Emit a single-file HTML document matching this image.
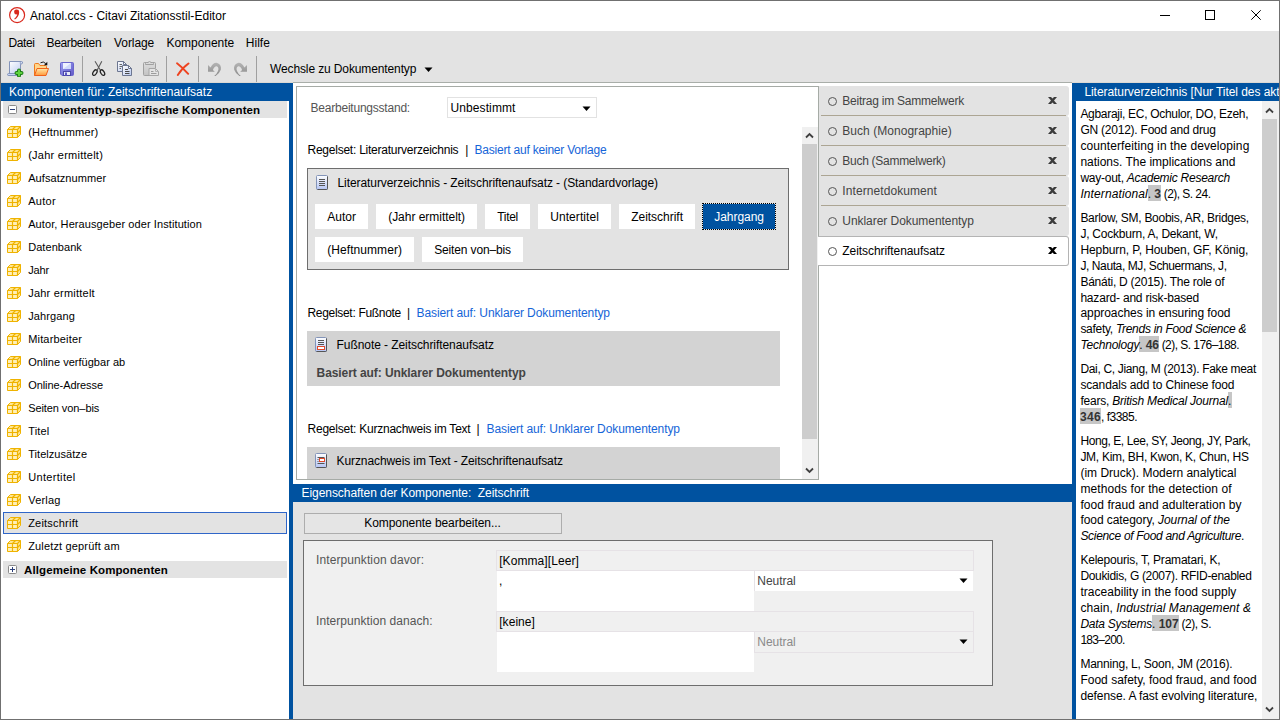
<!DOCTYPE html>
<html lang="de">
<head>
<meta charset="utf-8">
<title>Anatol.ccs - Citavi Zitationsstil-Editor</title>
<style>
html,body{margin:0;padding:0;}
body{width:1280px;height:720px;overflow:hidden;position:relative;background:#fff;font-family:"Liberation Sans",sans-serif;font-size:12px;color:#000;}
*{box-sizing:border-box;}
.a{position:absolute;white-space:nowrap;}
.t{position:absolute;white-space:pre;line-height:16px;height:16px;}
.blue{background:#0052a0;}
.hdr{color:#fff;font-size:12px;}
/* tree */
.ti{position:absolute;left:28px;font-size:11px;line-height:14px;height:14px;white-space:nowrap;}
.cube{position:absolute;left:7px;width:14px;height:12px;}
.gh{font-weight:700;font-size:11.5px;line-height:15px;white-space:nowrap;}
/* rule buttons */
.rb{position:absolute;height:25px;background:#fff;text-align:center;line-height:25px;white-space:nowrap;}
/* tabs */
.tab{position:absolute;left:819px;width:250px;height:30px;background:#e3e3e3;border-radius:0 3px 3px 0;}
.tab .sep{position:absolute;left:2px;right:3px;bottom:0;height:1px;background:#aca593;}
.tab .rad{position:absolute;left:9px;top:11px;width:9px;height:9px;border:1px solid #555;border-radius:50%;}
.tab.sel{left:818px;width:251px;top:236px;height:30px;background:#fff;border:1px solid #b4b4b4;border-left:0;}
.tab.sel .rad{left:10px;top:10px;}
.lnk{color:#1565d8;}
/* bibliography */
.bib{position:absolute;left:1080px;width:180px;line-height:16px;font-size:12px;white-space:nowrap;}
.hl{background:#c6c6c6;}
.bl b{color:#333;}
</style>
</head>
<body>
<!-- ===== window chrome ===== -->
<div class="a" style="left:0;top:0;width:1280px;height:31px;background:#fff;"></div>
<div class="a" id="chrome" style="left:0;top:31px;width:1280px;height:51px;background:#e3e3e3;"></div>
<div class="a" style="left:0;top:82px;width:1280px;height:1px;background:#dcd9d4;"></div>
<div class="a" style="left:293px;top:82px;width:779px;height:1px;background:#a9aea9;"></div>

<!-- title -->
<svg class="a" style="left:8px;top:6px" width="18" height="18" viewBox="0 0 18 18"><circle cx="9.1" cy="9.1" r="7.5" fill="#fff" stroke="#d9281c" stroke-width="1.2"/><path d="M8.8 3.6a2.4 2.4 0 0 1 2.4 2.4c0 3.5-2 6-4.3 7.6l-.7-.9c1.7-1.3 2.8-2.8 3-4.4a2.4 2.4 0 1 1-.4-4.7z" fill="#d9281c"/></svg>
<svg class="a" style="left:1155px;top:5px" width="120" height="22" viewBox="0 0 120 22"><g fill="none" stroke="#000" stroke-width="1"><path d="M5 10.5h10"/><rect x="50.5" y="5.5" width="9" height="9"/><path d="M96.3 5.3l9.4 9.4M105.7 5.3l-9.4 9.4"/></g></svg>

<!-- toolbar -->
<svg width="0" height="0" style="position:absolute"><defs>
<linearGradient id="gpap" x1="0" y1="0" x2="1" y2="1"><stop offset="0" stop-color="#ffffff"/><stop offset="1" stop-color="#b9c9f0"/></linearGradient>
<linearGradient id="gfold" x1="0" y1="0" x2="0" y2="1"><stop offset="0" stop-color="#ffe9a8"/><stop offset="1" stop-color="#ff9a3c"/></linearGradient>
<linearGradient id="gflop" x1="0" y1="0" x2="1" y2="1"><stop offset="0" stop-color="#9a9ff2"/><stop offset="1" stop-color="#6258c8"/></linearGradient>
<linearGradient id="ggray" x1="0" y1="0" x2="0" y2="1"><stop offset="0" stop-color="#dedede"/><stop offset="1" stop-color="#c2c2c2"/></linearGradient>
<linearGradient id="gund" x1="0" y1="0" x2="0" y2="1"><stop offset="0" stop-color="#b4b4b4"/><stop offset="1" stop-color="#8c8c8c"/></linearGradient>
</defs></svg>
<svg class="a" style="left:7px;top:61px" width="17" height="16" viewBox="0 0 17 16"><path d="M2.5 0.5H14.5Q15.8 0.5 15.5 2Q15.2 3.2 13.5 3.2V12.5H2.5Z" fill="url(#gpap)" stroke="#8494ba" stroke-width="1"/><path d="M13.5 3.2Q12.8 1.5 13.8 0.8" fill="none" stroke="#8494ba" stroke-width="0.8"/><path d="M1.5 12.5H11.5V14.5H2Q0.3 14.5 0.5 13.5Q0.6 12.5 1.5 12.5Z" fill="#c9d7f6" stroke="#8494ba" stroke-width="1"/><path d="M12 9.5V14.5M9.5 12H14.5" stroke="#1d7d18" stroke-width="4" stroke-linecap="round"/><path d="M12 9.5V14.5M9.5 12H14.5" stroke="#5fd23f" stroke-width="2" stroke-linecap="round"/></svg>
<svg class="a" style="left:33px;top:61px" width="17" height="16" viewBox="0 0 17 16"><path d="M1.5 14.5V3.5Q1.5 2.5 2.5 2.5H5.5L7 4.5H12.5Q13.5 4.5 13.5 5.5V7.5" fill="#ffd58a" stroke="#f07a1a" stroke-width="1"/><path d="M1.5 14.5L4 7.5H15.5L13 14.5Z" fill="url(#gfold)" stroke="#f0601a" stroke-width="1"/><path d="M7.5 1.8Q10.5 -0.2 12.8 2.6" fill="none" stroke="#222" stroke-width="1"/><path d="M14.3 0.8V4.2H10.9Z" fill="#111"/></svg>
<svg class="a" style="left:60px;top:62px" width="14" height="14" viewBox="0 0 14 14"><path d="M1.5 0.5H12.5Q13.5 0.5 13.5 1.5V12.5Q13.5 13.5 12.5 13.5H2L0.5 12V1.5Q0.5 0.5 1.5 0.5Z" fill="url(#gflop)" stroke="#6a66cc" stroke-width="1"/><rect x="3" y="1" width="8" height="6" fill="#eef2ff"/><path d="M3 7L11 1V7Z" fill="#cfd9fb"/><rect x="3.5" y="9.5" width="7" height="4" fill="#e6e9f8" stroke="#4a46a8" stroke-width="1"/><rect x="5" y="10.5" width="2" height="3" fill="#5a55c4"/></svg>
<svg class="a" style="left:91px;top:60px" width="16" height="17" viewBox="0 0 16 17"><path d="M4 1.2L9.6 10.5M10.8 1.2L6 10.5" fill="none" stroke="#5a5a5a" stroke-width="1.1"/><ellipse cx="3.9" cy="12.6" rx="1.7" ry="3.1" transform="rotate(32 3.9 12.6)" fill="none" stroke="#222" stroke-width="1.25"/><ellipse cx="11.5" cy="12.6" rx="1.7" ry="3.1" transform="rotate(-32 11.5 12.6)" fill="none" stroke="#222" stroke-width="1.25"/></svg>
<svg class="a" style="left:117px;top:61px" width="17" height="16" viewBox="0 0 17 16"><g transform="translate(0,0)"><path d="M0.5 0.5H6.5L9.5 3.5V10.5H0.5Z" fill="url(#gpap)" stroke="#6c7690" stroke-width="1"/><path d="M6.5 0.5V3.5H9.5Z" fill="#fff" stroke="#6c7690" stroke-width="1"/><path d="M2.5 3.5H5M2.5 5.5H5M2.5 7.5H4" stroke="#666" stroke-width="1"/></g><g transform="translate(5,4)"><path d="M0.5 0.5H6.5L9.5 3.5V10.5H0.5Z" fill="url(#gpap)" stroke="#6c7690" stroke-width="1"/><path d="M6.5 0.5V3.5H9.5Z" fill="#fff" stroke="#6c7690" stroke-width="1"/><path d="M3 4.5H6M3 6.5H7.5M3 8.5H7.5" stroke="#4a4a4a" stroke-width="1"/></g></svg>
<svg class="a" style="left:143px;top:61px" width="16" height="16" viewBox="0 0 16 16"><rect x="0.5" y="1.5" width="12" height="13" rx="1" fill="url(#ggray)" stroke="#a0a0a0" stroke-width="1"/><path d="M2.5 3.5V2.5Q2.5 1.5 3.5 1.5H5Q6.5 -0.8 8 1.5H9.5Q10.5 1.5 10.5 2.5V3.5Z" fill="#dadada" stroke="#a0a0a0" stroke-width="1"/><path d="M6 7.5H12.5L15.5 10.5V14.5H6Z" fill="#e4e4e4" stroke="#a6a6a6" stroke-width="1"/><path d="M12.5 7.5V10.5H15.5" fill="none" stroke="#b4b4b4" stroke-width="1"/><path d="M8 10.5H10.5M8 12.5H13.5" stroke="#9c9c9c" stroke-width="1"/></svg>
<svg class="a" style="left:176px;top:62px" width="14" height="14" viewBox="0 0 14 14"><path d="M1 1.2Q6 5 12.2 11.8M12.5 1.5Q6 6 1.8 13" fill="none" stroke="#ee4320" stroke-width="1.9" stroke-linecap="round"/></svg>
<svg class="a" style="left:207px;top:62px" width="15" height="15" viewBox="0 0 15 15"><path d="M1 3L1 9.8L7.8 9.8L5.9 7.9Q7.5 3.8 9.8 4.2Q12.3 5.5 11 9Q10 11.8 7.2 13.9L8.6 13.9Q12.6 11.5 13.8 7.8Q14.8 2.5 10.2 0.9Q6 0.3 3.6 5.6Z" fill="url(#gund)"/></svg>
<svg class="a" style="left:233px;top:62px" width="15" height="15" viewBox="0 0 15 15"><g transform="translate(15,0) scale(-1,1)"><path d="M1 3L1 9.8L7.8 9.8L5.9 7.9Q7.5 3.8 9.8 4.2Q12.3 5.5 11 9Q10 11.8 7.2 13.9L8.6 13.9Q12.6 11.5 13.8 7.8Q14.8 2.5 10.2 0.9Q6 0.3 3.6 5.6Z" fill="url(#gund)"/></g></svg>
<div class="a" style="left:82px;top:56px;width:1px;height:26px;background:#a0a0a0;"></div>
<div class="a" style="left:166px;top:56px;width:1px;height:26px;background:#a0a0a0;"></div>
<div class="a" style="left:198px;top:56px;width:1px;height:26px;background:#a0a0a0;"></div>
<div class="a" style="left:256px;top:56px;width:1px;height:26px;background:#a0a0a0;"></div>

<!-- ===== left panel ===== -->
<div class="a blue" style="left:1px;top:83px;width:292px;height:18px;"></div>
<div class="a blue" style="left:289px;top:83px;width:4px;height:636px;"></div>
<div class="a" style="left:3px;top:101px;width:284px;height:17px;background:#e3e3e3;"></div>
<svg class="a" style="left:8px;top:105px" width="9" height="9"><rect x="0.5" y="0.5" width="8" height="8" rx="1" fill="#fff" stroke="#8a8a8a"/><path d="M2 4.5h5" stroke="#2b3f7a"/></svg>
<div class="a gh" style="letter-spacing:0.07px;left:24.3px;top:103px;">Dokumententyp-spezifische Komponenten</div>
<svg class="cube" style="top:126px" width="14" height="12" viewBox="0 0 14 12"><path d="M0.5 3.5L3.5 0.5H13.5V8.5L10.5 11.5H0.5Z" fill="#ffe690" stroke="#efb300" stroke-width="1"/><path d="M1 4H10V11H1Z" fill="#fff0b8"/><path d="M0.5 3.5H10.5V11.5M10.5 3.5L13.5 0.5M5.5 3.5V11.5M0.5 7.5H10.5M5.5 3.5L8.5 0.5M10.5 7.5L13.5 4.5" fill="none" stroke="#efb300" stroke-width="1.2"/></svg>
<div class="ti" style="letter-spacing:0.2px;left:28.2px;top:125px;">(Heftnummer)</div>
<svg class="cube" style="top:149px" width="14" height="12" viewBox="0 0 14 12"><path d="M0.5 3.5L3.5 0.5H13.5V8.5L10.5 11.5H0.5Z" fill="#ffe690" stroke="#efb300" stroke-width="1"/><path d="M1 4H10V11H1Z" fill="#fff0b8"/><path d="M0.5 3.5H10.5V11.5M10.5 3.5L13.5 0.5M5.5 3.5V11.5M0.5 7.5H10.5M5.5 3.5L8.5 0.5M10.5 7.5L13.5 4.5" fill="none" stroke="#efb300" stroke-width="1.2"/></svg>
<div class="ti" style="letter-spacing:0.25px;left:28.2px;top:148px;">(Jahr ermittelt)</div>
<svg class="cube" style="top:172px" width="14" height="12" viewBox="0 0 14 12"><path d="M0.5 3.5L3.5 0.5H13.5V8.5L10.5 11.5H0.5Z" fill="#ffe690" stroke="#efb300" stroke-width="1"/><path d="M1 4H10V11H1Z" fill="#fff0b8"/><path d="M0.5 3.5H10.5V11.5M10.5 3.5L13.5 0.5M5.5 3.5V11.5M0.5 7.5H10.5M5.5 3.5L8.5 0.5M10.5 7.5L13.5 4.5" fill="none" stroke="#efb300" stroke-width="1.2"/></svg>
<div class="ti" style="letter-spacing:0.07px;left:28.2px;top:171px;">Aufsatznummer</div>
<svg class="cube" style="top:195px" width="14" height="12" viewBox="0 0 14 12"><path d="M0.5 3.5L3.5 0.5H13.5V8.5L10.5 11.5H0.5Z" fill="#ffe690" stroke="#efb300" stroke-width="1"/><path d="M1 4H10V11H1Z" fill="#fff0b8"/><path d="M0.5 3.5H10.5V11.5M10.5 3.5L13.5 0.5M5.5 3.5V11.5M0.5 7.5H10.5M5.5 3.5L8.5 0.5M10.5 7.5L13.5 4.5" fill="none" stroke="#efb300" stroke-width="1.2"/></svg>
<div class="ti" style="letter-spacing:0.3px;left:28.2px;top:194px;">Autor</div>
<svg class="cube" style="top:218px" width="14" height="12" viewBox="0 0 14 12"><path d="M0.5 3.5L3.5 0.5H13.5V8.5L10.5 11.5H0.5Z" fill="#ffe690" stroke="#efb300" stroke-width="1"/><path d="M1 4H10V11H1Z" fill="#fff0b8"/><path d="M0.5 3.5H10.5V11.5M10.5 3.5L13.5 0.5M5.5 3.5V11.5M0.5 7.5H10.5M5.5 3.5L8.5 0.5M10.5 7.5L13.5 4.5" fill="none" stroke="#efb300" stroke-width="1.2"/></svg>
<div class="ti" style="letter-spacing:0.09px;left:28.2px;top:217px;">Autor, Herausgeber oder Institution</div>
<svg class="cube" style="top:241px" width="14" height="12" viewBox="0 0 14 12"><path d="M0.5 3.5L3.5 0.5H13.5V8.5L10.5 11.5H0.5Z" fill="#ffe690" stroke="#efb300" stroke-width="1"/><path d="M1 4H10V11H1Z" fill="#fff0b8"/><path d="M0.5 3.5H10.5V11.5M10.5 3.5L13.5 0.5M5.5 3.5V11.5M0.5 7.5H10.5M5.5 3.5L8.5 0.5M10.5 7.5L13.5 4.5" fill="none" stroke="#efb300" stroke-width="1.2"/></svg>
<div class="ti" style="letter-spacing:0.06px;left:28.2px;top:240px;">Datenbank</div>
<svg class="cube" style="top:264px" width="14" height="12" viewBox="0 0 14 12"><path d="M0.5 3.5L3.5 0.5H13.5V8.5L10.5 11.5H0.5Z" fill="#ffe690" stroke="#efb300" stroke-width="1"/><path d="M1 4H10V11H1Z" fill="#fff0b8"/><path d="M0.5 3.5H10.5V11.5M10.5 3.5L13.5 0.5M5.5 3.5V11.5M0.5 7.5H10.5M5.5 3.5L8.5 0.5M10.5 7.5L13.5 4.5" fill="none" stroke="#efb300" stroke-width="1.2"/></svg>
<div class="ti" style="letter-spacing:-0.15px;left:28.2px;top:263px;">Jahr</div>
<svg class="cube" style="top:287px" width="14" height="12" viewBox="0 0 14 12"><path d="M0.5 3.5L3.5 0.5H13.5V8.5L10.5 11.5H0.5Z" fill="#ffe690" stroke="#efb300" stroke-width="1"/><path d="M1 4H10V11H1Z" fill="#fff0b8"/><path d="M0.5 3.5H10.5V11.5M10.5 3.5L13.5 0.5M5.5 3.5V11.5M0.5 7.5H10.5M5.5 3.5L8.5 0.5M10.5 7.5L13.5 4.5" fill="none" stroke="#efb300" stroke-width="1.2"/></svg>
<div class="ti" style="letter-spacing:0.22px;left:28.2px;top:286px;">Jahr ermittelt</div>
<svg class="cube" style="top:310px" width="14" height="12" viewBox="0 0 14 12"><path d="M0.5 3.5L3.5 0.5H13.5V8.5L10.5 11.5H0.5Z" fill="#ffe690" stroke="#efb300" stroke-width="1"/><path d="M1 4H10V11H1Z" fill="#fff0b8"/><path d="M0.5 3.5H10.5V11.5M10.5 3.5L13.5 0.5M5.5 3.5V11.5M0.5 7.5H10.5M5.5 3.5L8.5 0.5M10.5 7.5L13.5 4.5" fill="none" stroke="#efb300" stroke-width="1.2"/></svg>
<div class="ti" style="letter-spacing:0.12px;left:28.2px;top:309px;">Jahrgang</div>
<svg class="cube" style="top:333px" width="14" height="12" viewBox="0 0 14 12"><path d="M0.5 3.5L3.5 0.5H13.5V8.5L10.5 11.5H0.5Z" fill="#ffe690" stroke="#efb300" stroke-width="1"/><path d="M1 4H10V11H1Z" fill="#fff0b8"/><path d="M0.5 3.5H10.5V11.5M10.5 3.5L13.5 0.5M5.5 3.5V11.5M0.5 7.5H10.5M5.5 3.5L8.5 0.5M10.5 7.5L13.5 4.5" fill="none" stroke="#efb300" stroke-width="1.2"/></svg>
<div class="ti" style="letter-spacing:0.17px;left:28.2px;top:332px;">Mitarbeiter</div>
<svg class="cube" style="top:356px" width="14" height="12" viewBox="0 0 14 12"><path d="M0.5 3.5L3.5 0.5H13.5V8.5L10.5 11.5H0.5Z" fill="#ffe690" stroke="#efb300" stroke-width="1"/><path d="M1 4H10V11H1Z" fill="#fff0b8"/><path d="M0.5 3.5H10.5V11.5M10.5 3.5L13.5 0.5M5.5 3.5V11.5M0.5 7.5H10.5M5.5 3.5L8.5 0.5M10.5 7.5L13.5 4.5" fill="none" stroke="#efb300" stroke-width="1.2"/></svg>
<div class="ti" style="letter-spacing:0.02px;left:28.2px;top:355px;">Online verfügbar ab</div>
<svg class="cube" style="top:379px" width="14" height="12" viewBox="0 0 14 12"><path d="M0.5 3.5L3.5 0.5H13.5V8.5L10.5 11.5H0.5Z" fill="#ffe690" stroke="#efb300" stroke-width="1"/><path d="M1 4H10V11H1Z" fill="#fff0b8"/><path d="M0.5 3.5H10.5V11.5M10.5 3.5L13.5 0.5M5.5 3.5V11.5M0.5 7.5H10.5M5.5 3.5L8.5 0.5M10.5 7.5L13.5 4.5" fill="none" stroke="#efb300" stroke-width="1.2"/></svg>
<div class="ti" style="letter-spacing:-0.07px;left:28.2px;top:378px;">Online-Adresse</div>
<svg class="cube" style="top:402px" width="14" height="12" viewBox="0 0 14 12"><path d="M0.5 3.5L3.5 0.5H13.5V8.5L10.5 11.5H0.5Z" fill="#ffe690" stroke="#efb300" stroke-width="1"/><path d="M1 4H10V11H1Z" fill="#fff0b8"/><path d="M0.5 3.5H10.5V11.5M10.5 3.5L13.5 0.5M5.5 3.5V11.5M0.5 7.5H10.5M5.5 3.5L8.5 0.5M10.5 7.5L13.5 4.5" fill="none" stroke="#efb300" stroke-width="1.2"/></svg>
<div class="ti" style="letter-spacing:-0.08px;left:28.2px;top:401px;">Seiten von–bis</div>
<svg class="cube" style="top:425px" width="14" height="12" viewBox="0 0 14 12"><path d="M0.5 3.5L3.5 0.5H13.5V8.5L10.5 11.5H0.5Z" fill="#ffe690" stroke="#efb300" stroke-width="1"/><path d="M1 4H10V11H1Z" fill="#fff0b8"/><path d="M0.5 3.5H10.5V11.5M10.5 3.5L13.5 0.5M5.5 3.5V11.5M0.5 7.5H10.5M5.5 3.5L8.5 0.5M10.5 7.5L13.5 4.5" fill="none" stroke="#efb300" stroke-width="1.2"/></svg>
<div class="ti" style="letter-spacing:0.16px;left:28.2px;top:424px;">Titel</div>
<svg class="cube" style="top:448px" width="14" height="12" viewBox="0 0 14 12"><path d="M0.5 3.5L3.5 0.5H13.5V8.5L10.5 11.5H0.5Z" fill="#ffe690" stroke="#efb300" stroke-width="1"/><path d="M1 4H10V11H1Z" fill="#fff0b8"/><path d="M0.5 3.5H10.5V11.5M10.5 3.5L13.5 0.5M5.5 3.5V11.5M0.5 7.5H10.5M5.5 3.5L8.5 0.5M10.5 7.5L13.5 4.5" fill="none" stroke="#efb300" stroke-width="1.2"/></svg>
<div class="ti" style="letter-spacing:0.05px;left:28.2px;top:447px;">Titelzusätze</div>
<svg class="cube" style="top:471px" width="14" height="12" viewBox="0 0 14 12"><path d="M0.5 3.5L3.5 0.5H13.5V8.5L10.5 11.5H0.5Z" fill="#ffe690" stroke="#efb300" stroke-width="1"/><path d="M1 4H10V11H1Z" fill="#fff0b8"/><path d="M0.5 3.5H10.5V11.5M10.5 3.5L13.5 0.5M5.5 3.5V11.5M0.5 7.5H10.5M5.5 3.5L8.5 0.5M10.5 7.5L13.5 4.5" fill="none" stroke="#efb300" stroke-width="1.2"/></svg>
<div class="ti" style="letter-spacing:0.33px;left:28.2px;top:470px;">Untertitel</div>
<svg class="cube" style="top:494px" width="14" height="12" viewBox="0 0 14 12"><path d="M0.5 3.5L3.5 0.5H13.5V8.5L10.5 11.5H0.5Z" fill="#ffe690" stroke="#efb300" stroke-width="1"/><path d="M1 4H10V11H1Z" fill="#fff0b8"/><path d="M0.5 3.5H10.5V11.5M10.5 3.5L13.5 0.5M5.5 3.5V11.5M0.5 7.5H10.5M5.5 3.5L8.5 0.5M10.5 7.5L13.5 4.5" fill="none" stroke="#efb300" stroke-width="1.2"/></svg>
<div class="ti" style="letter-spacing:0.22px;left:28.2px;top:493px;">Verlag</div>
<div class="a" style="left:3px;top:512px;width:284px;height:22px;background:#e3e3e3;border:1px solid #2f66c8;"></div>
<svg class="cube" style="top:517px" width="14" height="12" viewBox="0 0 14 12"><path d="M0.5 3.5L3.5 0.5H13.5V8.5L10.5 11.5H0.5Z" fill="#ffe690" stroke="#efb300" stroke-width="1"/><path d="M1 4H10V11H1Z" fill="#fff0b8"/><path d="M0.5 3.5H10.5V11.5M10.5 3.5L13.5 0.5M5.5 3.5V11.5M0.5 7.5H10.5M5.5 3.5L8.5 0.5M10.5 7.5L13.5 4.5" fill="none" stroke="#efb300" stroke-width="1.2"/></svg>
<div class="ti" style="letter-spacing:0.21px;left:28.2px;top:516px;">Zeitschrift</div>
<svg class="cube" style="top:540px" width="14" height="12" viewBox="0 0 14 12"><path d="M0.5 3.5L3.5 0.5H13.5V8.5L10.5 11.5H0.5Z" fill="#ffe690" stroke="#efb300" stroke-width="1"/><path d="M1 4H10V11H1Z" fill="#fff0b8"/><path d="M0.5 3.5H10.5V11.5M10.5 3.5L13.5 0.5M5.5 3.5V11.5M0.5 7.5H10.5M5.5 3.5L8.5 0.5M10.5 7.5L13.5 4.5" fill="none" stroke="#efb300" stroke-width="1.2"/></svg>
<div class="ti" style="letter-spacing:0.16px;left:28.2px;top:539px;">Zuletzt geprüft am</div>
<div class="a" style="left:3px;top:561px;width:284px;height:17px;background:#e3e3e3;"></div>
<svg class="a" style="left:8px;top:565px" width="9" height="9"><rect x="0.5" y="0.5" width="8" height="8" rx="1" fill="#fff" stroke="#8a8a8a"/><path d="M2 4.5h5M4.5 2v5" stroke="#2b3f7a"/></svg>
<div class="a gh" style="letter-spacing:0.09px;left:24.1px;top:563px;">Allgemeine Komponenten</div>

<!-- ===== center top panel ===== -->
<div class="a" id="ctop" style="left:296px;top:86px;width:523px;height:394px;border:1px solid #a6aba6;background:#fff;overflow:hidden;"></div>

<div class="t" style="letter-spacing:-0.22px;left:310.5px;top:100px;color:#555;">Bearbeitungsstand:</div>
<div class="a" style="left:447px;top:97px;width:150px;height:21px;border:1px solid #e2e2e2;background:#fff;"></div>
<div class="t" style="letter-spacing:0.1px;left:450.5px;top:100px;">Unbestimmt</div>
<svg class="a" style="left:582px;top:106px" width="9" height="6"><path d="M0.5 0.5h8l-4 4.5z" fill="#000"/></svg>
<div class="t" style="letter-spacing:-0.24px;left:307.5px;top:142px;">Regelset: Literaturverzeichnis</div>
<div class="t" style="left:465.2px;top:142px;">|</div>
<div class="t" style="letter-spacing:-0.21px;left:474.5px;top:142px;color:#1565d8;">Basiert auf keiner Vorlage</div>
<div class="a" style="left:307px;top:168px;width:482px;height:102px;border:1px solid #6e6e6e;background:#e3e3e3;"></div>
<svg class="a" style="left:316px;top:175px" width="12" height="15" viewBox="0 0 12 15"><defs><linearGradient id="dg1" x1="0" y1="0" x2="0" y2="1"><stop offset="0" stop-color="#ffffff"/><stop offset="1" stop-color="#b4c4f4"/></linearGradient></defs><rect x="0.5" y="0.5" width="11" height="14" rx="1" fill="url(#dg1)" stroke="#8394b8"/><path d="M11.5 1.5V13.5Q11.5 14.5 10.5 14.5H1.5" fill="none" stroke="#555"/><path d="M3 4.5h6M3 6.5h6M3 8.5h6M3 10.5h6" stroke="#555" stroke-width="1"/></svg>
<div class="t" style="letter-spacing:-0.08px;left:337.5px;top:175px;">Literaturverzeichnis - Zeitschriftenaufsatz - (Standardvorlage)</div>
<div class="a" style="left:315px;top:204px;width:53px;height:25px;background:#fff;"></div>
<div class="t" style="letter-spacing:0.02px;left:327.2px;top:209px;">Autor</div>
<div class="a" style="left:376px;top:204px;width:101px;height:25px;background:#fff;"></div>
<div class="t" style="letter-spacing:-0.03px;left:388.2px;top:209px;">(Jahr ermittelt)</div>
<div class="a" style="left:485px;top:204px;width:45px;height:25px;background:#fff;"></div>
<div class="t" style="letter-spacing:-0.29px;left:497.2px;top:209px;">Titel</div>
<div class="a" style="left:538px;top:204px;width:73px;height:25px;background:#fff;"></div>
<div class="t" style="letter-spacing:0.08px;left:550.2px;top:209px;">Untertitel</div>
<div class="a" style="left:619px;top:204px;width:76px;height:25px;background:#fff;"></div>
<div class="t" style="letter-spacing:-0.02px;left:631.2px;top:209px;">Zeitschrift</div>
<div class="a" style="left:315px;top:237px;width:99px;height:25px;background:#fff;"></div>
<div class="t" style="letter-spacing:0.07px;left:327.2px;top:242px;">(Heftnummer)</div>
<div class="a" style="left:422px;top:237px;width:101px;height:25px;background:#fff;"></div>
<div class="t" style="letter-spacing:-0.14px;left:434.2px;top:242px;">Seiten von–bis</div>
<div class="a" style="left:702px;top:203px;width:74px;height:27px;background:#0052a0;background-clip:padding-box;border:1px dotted #000;"></div>
<div class="t" style="letter-spacing:-0.03px;left:714.2px;top:209px;color:#fff;">Jahrgang</div>
<div class="t" style="letter-spacing:-0.31px;left:307.5px;top:305px;">Regelset: Fußnote</div>
<div class="t" style="left:406.9px;top:305px;">|</div>
<div class="t" style="letter-spacing:-0.1px;left:416.6px;top:305px;color:#1565d8;">Basiert auf: Unklarer Dokumententyp</div>
<div class="a" style="left:307px;top:331px;width:473px;height:55px;background:#d3d3d3;"></div>
<svg class="a" style="left:315px;top:337px" width="12" height="15" viewBox="0 0 12 15"><defs><linearGradient id="dg2" x1="0" y1="0" x2="0" y2="1"><stop offset="0" stop-color="#ffffff"/><stop offset="1" stop-color="#b4c4f4"/></linearGradient></defs><rect x="0.5" y="0.5" width="11" height="14" rx="1" fill="url(#dg2)" stroke="#8394b8"/><path d="M11.5 1.5V13.5Q11.5 14.5 10.5 14.5H1.5" fill="none" stroke="#555"/><path d="M3 3.5h6M3 5.5h6M3 7.5h6" stroke="#555" stroke-width="1"/><rect x="2.5" y="9.5" width="7" height="3" fill="#fff" stroke="#e04a2a"/></svg>
<div class="t" style="letter-spacing:-0.07px;left:336.6px;top:337px;">Fußnote - Zeitschriftenaufsatz</div>
<div class="t" style="letter-spacing:-0.08px;left:316.6px;top:365px;font-weight:700;color:#444;">Basiert auf: Unklarer Dokumententyp</div>
<div class="t" style="letter-spacing:-0.23px;left:307.5px;top:421px;">Regelset: Kurznachweis im Text</div>
<div class="t" style="left:476.5px;top:421px;">|</div>
<div class="t" style="letter-spacing:-0.1px;left:486.6px;top:421px;color:#1565d8;">Basiert auf: Unklarer Dokumententyp</div>
<div class="a" style="left:307px;top:447px;width:473px;height:32px;background:#d3d3d3;"></div>
<svg class="a" style="left:315px;top:453px" width="12" height="15" viewBox="0 0 12 15"><defs><linearGradient id="dg3" x1="0" y1="0" x2="0" y2="1"><stop offset="0" stop-color="#ffffff"/><stop offset="1" stop-color="#b4c4f4"/></linearGradient></defs><rect x="0.5" y="0.5" width="11" height="14" rx="1" fill="url(#dg3)" stroke="#8394b8"/><path d="M11.5 1.5V13.5Q11.5 14.5 10.5 14.5H1.5" fill="none" stroke="#555"/><path d="M2.5 4.5h7M2.5 10.5h7M2.5 6.5h1M2.5 8.5h1" stroke="#555" stroke-width="1"/><rect x="4.5" y="5.5" width="5" height="3" fill="#fff" stroke="#e04a2a"/></svg>
<div class="t" style="letter-spacing:-0.1px;left:336.6px;top:453px;">Kurznachweis im Text - Zeitschriftenaufsatz</div>
<div class="a" style="left:802px;top:127px;width:16px;height:352px;background:#f0f0f0;"></div>
<div class="a" style="left:802px;top:144px;width:15px;height:295px;background:#cdcdcd;"></div>
<svg class="a" style="left:805px;top:132px" width="9" height="7"><path d="M1 5.5L4.5 2L8 5.5" fill="none" stroke="#404040" stroke-width="1.8"/></svg>
<svg class="a" style="left:805px;top:467px" width="9" height="7"><path d="M1 1.5L4.5 5L8 1.5" fill="none" stroke="#404040" stroke-width="1.8"/></svg>
<!-- ===== tabs ===== -->
<div class="tab" style="top:86px;"><span class="rad"></span><span class="sep"></span></div>
<div class="t" style="letter-spacing:-0.24px;left:842.3px;top:93px;color:#444;">Beitrag im Sammelwerk</div>
<svg class="a" style="left:1048px;top:97px" width="9" height="7" viewBox="0 0 9 7"><path d="M0 0H3L4.5 1.6L6 0H9L6 3.5L9 7H6L4.5 5.4L3 7H0L3 3.5Z" fill="#3c3c3c"/></svg>
<div class="tab" style="top:116px;"><span class="rad"></span><span class="sep"></span></div>
<div class="t" style="letter-spacing:0.04px;left:842.3px;top:123px;color:#444;">Buch (Monographie)</div>
<svg class="a" style="left:1048px;top:127px" width="9" height="7" viewBox="0 0 9 7"><path d="M0 0H3L4.5 1.6L6 0H9L6 3.5L9 7H6L4.5 5.4L3 7H0L3 3.5Z" fill="#3c3c3c"/></svg>
<div class="tab" style="top:146px;"><span class="rad"></span><span class="sep"></span></div>
<div class="t" style="letter-spacing:-0.28px;left:842.3px;top:153px;color:#444;">Buch (Sammelwerk)</div>
<svg class="a" style="left:1048px;top:157px" width="9" height="7" viewBox="0 0 9 7"><path d="M0 0H3L4.5 1.6L6 0H9L6 3.5L9 7H6L4.5 5.4L3 7H0L3 3.5Z" fill="#3c3c3c"/></svg>
<div class="tab" style="top:176px;"><span class="rad"></span><span class="sep"></span></div>
<div class="t" style="letter-spacing:0.08px;left:842.3px;top:183px;color:#444;">Internetdokument</div>
<svg class="a" style="left:1048px;top:187px" width="9" height="7" viewBox="0 0 9 7"><path d="M0 0H3L4.5 1.6L6 0H9L6 3.5L9 7H6L4.5 5.4L3 7H0L3 3.5Z" fill="#3c3c3c"/></svg>
<div class="tab" style="top:206px;"><span class="rad"></span></div>
<div class="t" style="letter-spacing:-0.05px;left:842.3px;top:213px;color:#444;">Unklarer Dokumententyp</div>
<svg class="a" style="left:1048px;top:217px" width="9" height="7" viewBox="0 0 9 7"><path d="M0 0H3L4.5 1.6L6 0H9L6 3.5L9 7H6L4.5 5.4L3 7H0L3 3.5Z" fill="#3c3c3c"/></svg>
<div class="tab sel" style="top:236px;"><span class="rad"></span></div>
<div class="t" style="letter-spacing:-0.07px;left:842.3px;top:243px;">Zeitschriftenaufsatz</div>
<svg class="a" style="left:1048px;top:247px" width="9" height="7" viewBox="0 0 9 7"><path d="M0 0H3L4.5 1.6L6 0H9L6 3.5L9 7H6L4.5 5.4L3 7H0L3 3.5Z" fill="#000"/></svg>

<!-- ===== center bottom ===== -->
<div class="a blue" style="left:289px;top:484px;width:787px;height:18px;"></div>
<div class="a" style="left:293px;top:502px;width:779px;height:217px;background:#e3e3e3;"></div>

<div class="a" style="left:304px;top:513px;width:258px;height:21px;border:1px solid #adadad;background:#e5e5e5;"></div>
<div class="t" style="letter-spacing:-0.07px;left:364.3px;top:515px;">Komponente bearbeiten...</div>
<div class="a" style="left:303px;top:540px;width:690px;height:146px;border:1px solid #6e6e6e;background:#f0f0f0;"></div>
<div class="t" style="letter-spacing:0.1px;left:316px;top:552px;color:#555;">Interpunktion davor:</div>
<div class="a" style="left:496px;top:550px;width:478px;height:21px;border:1px solid #e6e2e6;background:#f0f0f0;"></div>
<div class="t" style="letter-spacing:0.08px;left:499.2px;top:553px;">[Komma][Leer]</div>
<div class="a" style="left:497px;top:571px;width:257px;height:40px;background:#fff;"></div>
<div class="a" style="left:754px;top:571px;width:219px;height:20px;background:#fff;border-left:1px solid #e6e2e6;"></div>
<div class="t" style="letter-spacing:-0.04px;left:757.3px;top:573px;color:#444;">Neutral</div>
<div class="t" style="left:499px;top:573px;">,</div>
<svg class="a" style="left:959px;top:578px" width="9" height="6"><path d="M0.5 0.5h8l-4 4.5z" fill="#000"/></svg>
<div class="t" style="letter-spacing:0.06px;left:316px;top:613px;color:#555;">Interpunktion danach:</div>
<div class="a" style="left:496px;top:611px;width:478px;height:21px;border:1px solid #e6e2e6;background:#f0f0f0;"></div>
<div class="t" style="letter-spacing:0.06px;left:499.2px;top:614px;">[keine]</div>
<div class="a" style="left:497px;top:632px;width:257px;height:40px;background:#fff;"></div>
<div class="a" style="left:754px;top:632px;width:220px;height:21px;background:#f0f0f0;border:1px solid #e6e2e6;border-top:0;"></div>
<div class="t" style="letter-spacing:-0.04px;left:757.3px;top:634px;color:#8a8a8a;">Neutral</div>
<svg class="a" style="left:959px;top:639px" width="9" height="6"><path d="M0.5 0.5h8l-4 4.5z" fill="#000"/></svg>
<!-- ===== right panel ===== -->
<div class="a blue" style="left:1072px;top:83px;width:208px;height:18px;"></div>
<div class="a blue" style="left:1072px;top:83px;width:4px;height:636px;"></div>

<div class="a" style="left:1262px;top:101px;width:17px;height:618px;background:#f0f0f0;"></div>
<div class="a" style="left:1262px;top:119px;width:15px;height:213px;background:#cdcdcd;"></div>
<svg class="a" style="left:1265px;top:107px" width="9" height="7"><path d="M1 5.5L4.5 2L8 5.5" fill="none" stroke="#404040" stroke-width="1.8"/></svg>
<svg class="a" style="left:1265px;top:706px" width="9" height="7"><path d="M1 1.5L4.5 5L8 1.5" fill="none" stroke="#404040" stroke-width="1.8"/></svg>
<div class="t bl" style="letter-spacing:-0.3px;left:1080.4px;top:106px;">Agbaraji, EC, Ochulor, DO, Ezeh,</div>
<div class="t bl" style="letter-spacing:-0.23px;left:1080.4px;top:122px;">GN (2012). Food and drug</div>
<div class="t bl" style="letter-spacing:0.09px;left:1080.4px;top:138px;">counterfeiting in the developing</div>
<div class="t bl" style="letter-spacing:-0.01px;left:1080.4px;top:154px;">nations. The implications and</div>
<div class="t bl" style="letter-spacing:-0.25px;left:1080.4px;top:170px;">way-out, <i>Academic Research</i></div>
<div class="a hl" style="left:1148px;top:185px;width:13px;height:16px;"></div>
<div class="t bl" style="letter-spacing:0.1px;left:1080.4px;top:186px;"><i>International</i></div>
<div class="t bl" style="letter-spacing:-0.09px;left:1147.8px;top:186px;">. <b>3</b></div>
<div class="t bl" style="letter-spacing:-0.54px;left:1160.9px;top:186px;"> (2), S. 24.</div>
<div class="t bl" style="letter-spacing:-0.28px;left:1080.4px;top:210px;">Barlow, SM, Boobis, AR, Bridges,</div>
<div class="t bl" style="letter-spacing:-0.23px;left:1080.4px;top:226px;">J, Cockburn, A, Dekant, W,</div>
<div class="t bl" style="letter-spacing:-0.09px;left:1080.4px;top:242px;">Hepburn, P, Houben, GF, König,</div>
<div class="t bl" style="letter-spacing:-0.4px;left:1080.4px;top:258px;">J, Nauta, MJ, Schuermans, J,</div>
<div class="t bl" style="letter-spacing:-0.25px;left:1080.4px;top:274px;">Bánáti, D (2015). The role of</div>
<div class="t bl" style="letter-spacing:-0.19px;left:1080.4px;top:290px;">hazard- and risk-based</div>
<div class="t bl" style="letter-spacing:-0.05px;left:1080.4px;top:305px;">approaches in ensuring food</div>
<div class="t bl" style="letter-spacing:-0.29px;left:1080.4px;top:321px;">safety, <i>Trends in Food Science &amp;</i></div>
<div class="a hl" style="left:1139px;top:336px;width:20px;height:16px;"></div>
<div class="t bl" style="letter-spacing:-0.2px;left:1080.4px;top:337px;"><i>Technology</i></div>
<div class="t bl" style="letter-spacing:-0.11px;left:1139.3px;top:337px;">. <b>46</b></div>
<div class="t bl" style="letter-spacing:-0.55px;left:1158.9px;top:337px;"> (2), S. 176–188.</div>
<div class="t bl" style="letter-spacing:-0.33px;left:1080.4px;top:361px;">Dai, C, Jiang, M (2013). Fake meat</div>
<div class="t bl" style="letter-spacing:-0.15px;left:1080.4px;top:377px;">scandals add to Chinese food</div>
<div class="a hl" style="left:1228px;top:392px;width:4px;height:16px;"></div>
<div class="t bl" style="letter-spacing:-0.22px;left:1080.4px;top:393px;">fears, <i>British Medical Journal</i></div>
<div class="t bl" style="letter-spacing:0.26px;left:1228px;top:393px;">.</div>
<div class="a hl" style="left:1080px;top:408px;width:21px;height:16px;"></div>
<div class="t bl" style="letter-spacing:0.32px;left:1080px;top:409px;"><b>346</b></div>
<div class="t bl" style="letter-spacing:-0.5px;left:1101px;top:409px;">, f3385.</div>
<div class="t bl" style="letter-spacing:-0.42px;left:1080.4px;top:433px;">Hong, E, Lee, SY, Jeong, JY, Park,</div>
<div class="t bl" style="letter-spacing:-0.28px;left:1080.4px;top:449px;">JM, Kim, BH, Kwon, K, Chun, HS</div>
<div class="t bl" style="left:1080.4px;top:465px;">(im Druck). Modern analytical</div>
<div class="t bl" style="letter-spacing:0.09px;left:1080.4px;top:481px;">methods for the detection of</div>
<div class="t bl" style="letter-spacing:0.06px;left:1080.4px;top:497px;">food fraud and adulteration by</div>
<div class="t bl" style="letter-spacing:-0.06px;left:1080.4px;top:512px;">food category, <i>Journal of the</i></div>
<div class="t bl" style="letter-spacing:-0.31px;left:1080.4px;top:528px;"><i>Science of Food and Agriculture</i>.</div>
<div class="t bl" style="letter-spacing:-0.21px;left:1080.4px;top:552px;">Kelepouris, T, Pramatari, K,</div>
<div class="t bl" style="letter-spacing:-0.32px;left:1080.4px;top:568px;">Doukidis, G (2007). RFID-enabled</div>
<div class="t bl" style="letter-spacing:0.04px;left:1080.4px;top:584px;">traceability in the food supply</div>
<div class="t bl" style="letter-spacing:0.06px;left:1080.4px;top:600px;">chain, <i>Industrial Management &amp;</i></div>
<div class="a hl" style="left:1152px;top:615px;width:27px;height:16px;"></div>
<div class="t bl" style="letter-spacing:-0.26px;left:1080.4px;top:616px;"><i>Data Systems</i></div>
<div class="t bl" style="left:1152px;top:616px;">. <b>107</b></div>
<div class="t bl" style="letter-spacing:-0.46px;left:1178.7px;top:616px;"> (2), S.</div>
<div class="t bl" style="letter-spacing:-0.72px;left:1080.4px;top:632px;">183–200.</div>
<div class="t bl" style="letter-spacing:-0.22px;left:1080.4px;top:656px;">Manning, L, Soon, JM (2016).</div>
<div class="t bl" style="letter-spacing:0.01px;left:1080.4px;top:672px;">Food safety, food fraud, and food</div>
<div class="t bl" style="letter-spacing:-0.07px;left:1080.4px;top:688px;">defense. A fast evolving literature,</div>
<div class="t" style="letter-spacing:0.03px;left:30px;top:8px;">Anatol.ccs - Citavi Zitationsstil-Editor</div>
<div class="t" style="letter-spacing:-0.4px;left:8.5px;top:35px;">Datei</div>
<div class="t" style="letter-spacing:-0.33px;left:46.5px;top:35px;">Bearbeiten</div>
<div class="t" style="letter-spacing:-0.07px;left:114px;top:35px;">Vorlage</div>
<div class="t" style="letter-spacing:-0.04px;left:166.5px;top:35px;">Komponente</div>
<div class="t" style="letter-spacing:0.06px;left:245.7px;top:35px;">Hilfe</div>
<div class="t" style="letter-spacing:-0.12px;left:270px;top:61px;">Wechsle zu Dokumententyp</div>
<svg class="a" style="left:424px;top:67px" width="9" height="6"><path d="M0.5 0.5h8l-4 4.5z" fill="#000"/></svg>
<div class="t hdr" style="letter-spacing:0.01px;left:9px;top:84px;">Komponenten für: Zeitschriftenaufsatz</div>
<div class="t hdr" style="letter-spacing:-0.06px;left:301.5px;top:485px;">Eigenschaften der Komponente:&nbsp; Zeitschrift</div>
<div class="t hdr" style="letter-spacing:-0.06px;left:1084.4px;top:84px;">Literaturverzeichnis [Nur Titel des akt</div>
<!-- window border -->
<div class="a" style="left:0;top:0;width:1280px;height:1px;background:#707070;"></div>
<div class="a" style="left:0;top:0;width:1px;height:720px;background:#707070;"></div>
<div class="a" style="left:1279px;top:0;width:1px;height:720px;background:#707070;"></div>
<div class="a" style="left:0;top:719px;width:1280px;height:1px;background:#707070;"></div>
</body>
</html>
